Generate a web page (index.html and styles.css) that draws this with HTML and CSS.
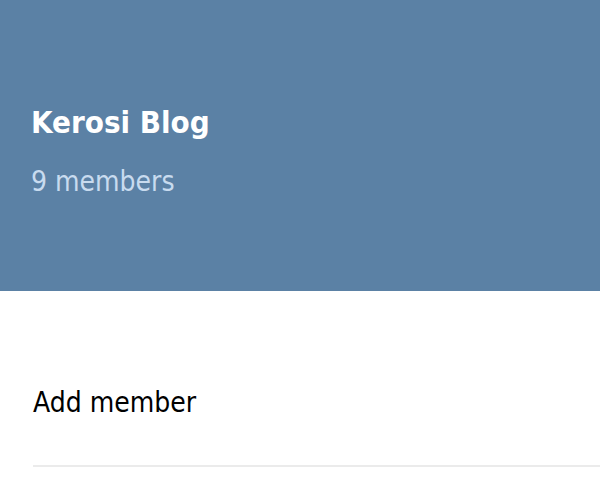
FILE: index.html
```html
<!DOCTYPE html>
<html>
<head>
<meta charset="utf-8">
<link rel="stylesheet" href="styles.css">
</head>
<body>
<header class="header">
  <h1 class="title">Kerosi Blog</h1>
  <div class="subtitle">9 members</div>
</header>
<main class="list">
  <div class="item">Add member</div>
</main>
</body>
</html>
```
FILE: styles.css
```css
html, body {
  margin: 0;
  padding: 0;
  background: #ffffff;
  font-family: "DejaVu Sans Condensed", "DejaVu Sans", sans-serif;
}
.header {
  background: #5b81a5;
  height: 291px;
  box-sizing: border-box;
  padding: 104px 0 0 31px;
}
.title {
  margin: 0;
  color: #ffffff;
  font-size: 31px;
  font-weight: bold;
  line-height: 36px;
}
.subtitle {
  margin-top: 26px;
  color: #c8dbef;
  font-size: 28px;
  line-height: 32px;
}
.list {
  padding: 88px 0 0 33px;
}
.item {
  color: #000000;
  font-size: 28px;
  line-height: 48px;
  padding-bottom: 38px;
  border-bottom: 2px solid #ebebeb;
}
```
